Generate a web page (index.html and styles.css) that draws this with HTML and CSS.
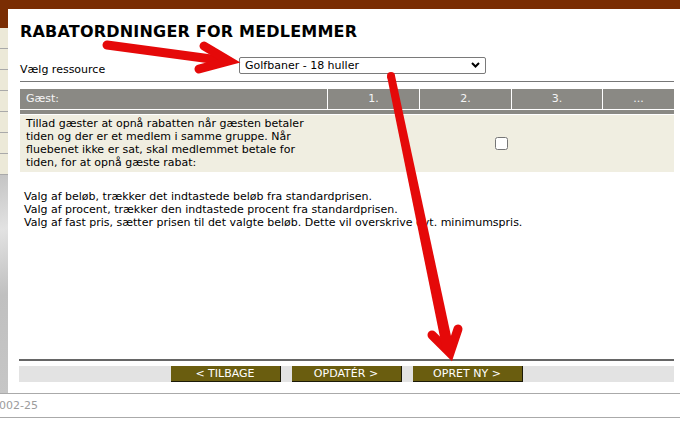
FILE: index.html
```html
<!DOCTYPE html>
<html lang="da">
<head>
  <meta charset="UTF-8" />
  <title>Rabatordninger for medlemmer</title>
  <link rel="stylesheet" href="styles.css">
</head>
<body>

<div class="topbar"></div>

<div class="frame">
  <div class="sidebar">
    <div class="side-head"></div>
    <div class="side-item"></div>
    <div class="side-item"></div>
    <div class="side-item"></div>
    <div class="side-item"></div>
    <div class="side-item"></div>
    <div class="side-item"></div>
    <div class="side-item"></div>
    <div class="side-rest"></div>
  </div>

  <div class="content">
    <h1 class="title">RABATORDNINGER FOR MEDLEMMER</h1>

    <div class="resource-row">
      <label class="resource-label" for="resource">Vælg ressource</label>
      <div class="select-wrap">
        <select class="resource-select" id="resource">
          <option>Golfbaner - 18 huller</option>
        </select>
        <svg class="chevron" viewBox="0 0 9 6"><path d="M1 1 L4.5 4.5 L8 1" /></svg>
      </div>
    </div>

    <table class="rates">
      <colgroup>
        <col style="width: 308px">
        <col style="width: 92px">
        <col style="width: 92px">
        <col style="width: 91px">
        <col style="width: 71px">
      </colgroup>
      <tr class="head-row">
        <th class="first">Gæst:</th>
        <th>1.</th>
        <th>2.</th>
        <th>3.</th>
        <th class="last">...</th>
      </tr>
      <tr class="sep-row">
        <td colspan="5"></td>
      </tr>
      <tr class="guest-row">
        <td class="guest-text">Tillad gæster at opnå rabatten når gæsten betaler tiden og der er et medlem i samme gruppe. Når fluebenet ikke er sat, skal medlemmet betale for tiden, for at opnå gæste rabat:</td>
        <td class="guest-check" colspan="4"><input type="checkbox"></td>
      </tr>
    </table>

    <p class="info">
      Valg af beløb, trækker det indtastede beløb fra standardprisen.<br>
      Valg af procent, trækker den indtastede procent fra standardprisen.<br>
      Valg af fast pris, sætter prisen til det valgte beløb. Dette vil overskrive evt. minimumspris.
    </p>

    <div class="actions">
      <div class="action-bar">
        <button class="action">&lt; TILBAGE</button>
        <button class="action">OPDATÉR &gt;</button>
        <button class="action">OPRET NY &gt;</button>
      </div>
    </div>
  </div>
</div>

<div class="footer">002-25</div>

<!-- annotation arrows drawn on top of the screenshot -->
<svg class="annotations" width="680" height="421" viewBox="0 0 680 421">
  <g fill="none" stroke="#e50909" stroke-width="9">
    <line x1="107" y1="45" x2="226" y2="61" stroke-linecap="round" />
    <polyline points="204,46 229,61 199,69" stroke-linejoin="miter" stroke-linecap="round" />
    <polyline points="432,335 450,353 458,329" stroke-linejoin="miter" stroke-linecap="round" />
  </g>
  <g fill="#e50909">
    <circle cx="391" cy="76" r="4" />
    <polygon points="394.9,75.2 387.1,76.8 443,352 454,350" />
  </g>
</svg>

</body>
</html>
```

FILE: styles.css
```css
* {
  box-sizing: border-box;
}
body {
  margin: 0;
  font-family: "DejaVu Sans", sans-serif;
  font-size: 11px;
  line-height: 13px;
  color: #000;
  background: #fff;
  position: relative;
  width: 680px;
  height: 421px;
  overflow: hidden;
}

.topbar {
  height: 9px;
  background: #7a2d03;
}

.frame {
  display: flex;
  height: 384px;
}

/* left menu strip, cut off by the screenshot */
.sidebar {
  width: 8px;
  display: flex;
  flex-direction: column;
}
.side-head {
  height: 19px;
  background: #7a2d03;
}
.side-item {
  height: 21px;
  background: #ece9d8;
  border-bottom: 1px solid #a9a9a9;
}
.side-rest {
  flex: 1;
  background: linear-gradient(165deg, #c4c4c4 0%, #e2e2e2 25%, #c0c0c0 55%, #c6c6c6 100%);
}

.content {
  flex: 1;
  display: flex;
  flex-direction: column;
  padding: 0 6px 11px 12px;
}

.title {
  margin: 13px 0 0;
  font-size: 16px;
  line-height: 19px;
  font-weight: bold;
  letter-spacing: 0.2px;
}

.resource-row {
  display: flex;
  align-items: flex-end;
  margin-top: 16px;
  padding-bottom: 5px;
  border-bottom: 1px solid #777;
}
.resource-label {
  width: 219px;
}
.select-wrap {
  position: relative;
  margin-bottom: 2px;
}
.resource-select {
  appearance: none;
  -webkit-appearance: none;
  width: 247px;
  height: 17px;
  border: 1px solid #7a7a7a;
  border-radius: 2px;
  padding: 0 0 0 5px;
  font: inherit;
  color: #000;
  background: #fff;
}
.chevron {
  position: absolute;
  right: 6px;
  top: 5px;
  width: 9px;
  height: 6px;
  fill: none;
  stroke: #000;
  stroke-width: 2;
  pointer-events: none;
}

.rates {
  margin-top: 7px;
  width: 100%;
  table-layout: fixed;
  border-collapse: separate;
  border-spacing: 0;
}
.head-row th {
  background: #8a8984;
  color: #f4f4f4;
  font-weight: normal;
  line-height: 20px;
  padding: 0;
  text-align: center;
  border-right: 1px solid #fff;
  border-bottom: 1px solid #fff;
}
.head-row th.first {
  text-align: left;
  padding-left: 6px;
}
.head-row th.last {
  border-right: 0;
}
.sep-row td {
  height: 5px;
  padding: 0;
  font-size: 0;
  line-height: 0;
  background: #8a8984;
  border-bottom: 1px solid #fff;
}
.guest-row td {
  background: #f0eee1;
  padding: 2px 6px 3px;
  vertical-align: middle;
}
.guest-check {
  text-align: center;
}
.guest-check input {
  margin: 0;
  vertical-align: middle;
}

.info {
  margin: 18px 0 0;
  padding-left: 4px;
}

.actions {
  margin-top: auto;
  margin-left: -1px;
  border-top: 2px solid #666;
  padding-top: 5px;
}
.action-bar {
  display: flex;
  justify-content: center;
  gap: 11px;
  height: 16px;
  background: #e3e3e3;
}
.action {
  width: 110px;
  height: 16px;
  padding: 0;
  border: 0;
  border-right: 1px solid #1c1a08;
  border-bottom: 1px solid #1c1a08;
  background: #6a5d0f;
  color: #fff;
  font: inherit;
  line-height: 15px;
  cursor: pointer;
}

.footer {
  height: 25px;
  border-top: 1px solid #aaa;
  border-bottom: 1px solid #aaa;
  color: #9c9c9c;
  line-height: 23px;
  text-indent: -1px;
}

.annotations {
  position: absolute;
  left: 0;
  top: 0;
  pointer-events: none;
}
```
